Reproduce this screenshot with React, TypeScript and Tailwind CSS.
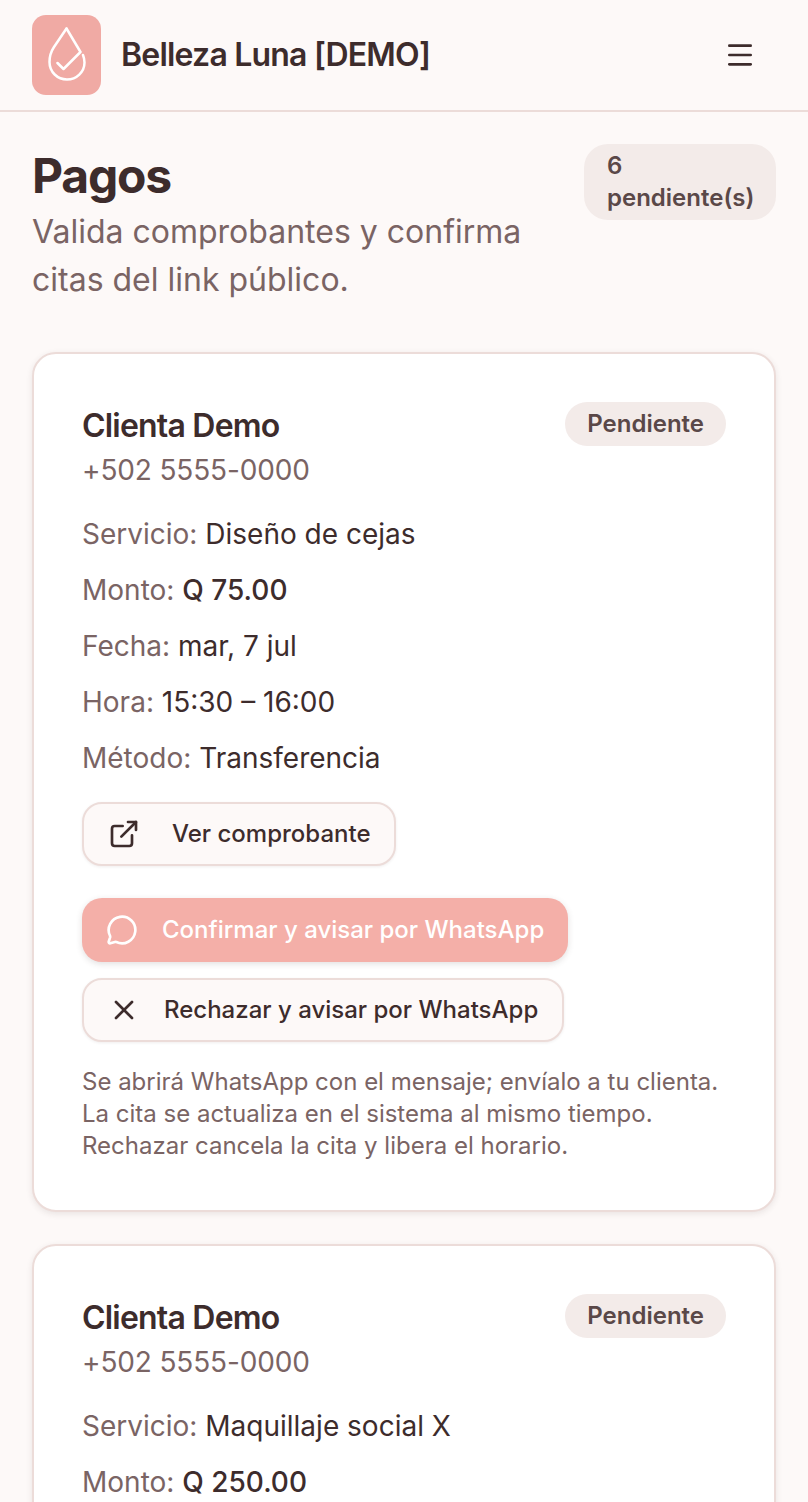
import { ExternalLink, Menu, MessageCircle, X } from "lucide-react";

const payments = [
  {
    service: "Diseño de cejas",
    amount: "Q 75.00",
    date: "mar, 7 jul",
    time: "15:30 – 16:00",
    method: "Transferencia",
  },
  {
    service: "Maquillaje social X",
    amount: "Q 250.00",
    date: "mar, 7 jul",
    time: "15:30 – 16:00",
    method: "Transferencia",
  },
];

function Logo() {
  return (
    <div className="flex h-[80px] w-[69px] items-center justify-center rounded-[14px] bg-[#f0aaa4]">
      <svg width="38" height="56" viewBox="0 0 38 56" fill="none" stroke="white" strokeWidth="2.5" strokeLinecap="round" strokeLinejoin="round">
        <path d="M18.5 1.5 L6 20 C3 24.5 1.5 30 1.5 35 C1.5 45 9.5 52.5 19 52.5 C28.5 52.5 36.5 45 36.5 35.5 C36.5 33 36 30.5 35 28" />
        <path d="M18.5 1.5 L32.5 25 L15.5 42 L9.5 36" />
      </svg>
    </div>
  );
}

function Row({ label, value, strong }: { label: string; value: string; strong?: boolean }) {
  return (
    <p className="text-[28px] leading-[40px] text-[#7a6464]">
      {label}: <span className={strong ? "font-medium text-[#3d2c2c]" : "text-[#3d2c2c]"}>{value}</span>
    </p>
  );
}

function PaymentCard({ p }: { p: (typeof payments)[number] }) {
  return (
    <article className="rounded-[24px] border-2 border-[#ecdcd9] bg-white p-[48px] shadow-[0_2px_6px_rgba(61,44,44,0.1)]">
      <div className="flex items-start justify-between">
        <div>
          <h2 className="text-[32px] leading-[48px] font-semibold tracking-[-0.8px] text-[#3d2c2c]">Clienta Demo</h2>
          <p className="text-[28px] leading-[40px] tracking-[-0.14px] text-[#7a6464]">+502 5555-0000</p>
        </div>
        <span className="rounded-full bg-[#f3ebe9] px-[22px] py-[6px] text-[24px] leading-[32px] font-semibold text-[#5a4848]">Pendiente</span>
      </div>
      <div className="mt-[24px] flex flex-col gap-[16px]">
        <Row label="Servicio" value={p.service} />
        <Row label="Monto" value={p.amount} strong />
        <Row label="Fecha" value={p.date} />
        <Row label="Hora" value={p.time} />
        <Row label="Método" value={p.method} />
      </div>
      <button className="mt-[24px] flex h-[64px] w-[314px] items-center gap-[32px] rounded-[20px] border-2 border-[#ecdcd9] bg-[#fdf9f8] pl-[24px] text-[24px] font-medium text-[#3d2c2c] shadow-[0_1px_3px_rgba(61,44,44,0.08)]">
        <ExternalLink size={32} strokeWidth={2} />
        Ver comprobante
      </button>
      <button className="mt-[32px] flex h-[64px] w-[486px] items-center gap-[24px] rounded-[20px] bg-[#f4afa8] pl-[24px] text-[24px] font-medium text-white shadow-[0_2px_6px_rgba(61,44,44,0.15)]">
        <MessageCircle size={32} strokeWidth={2} />
        Confirmar y avisar por WhatsApp
      </button>
      <button className="mt-[16px] flex h-[64px] w-[482px] items-center gap-[24px] rounded-[20px] border-2 border-[#ecdcd9] bg-[#fdf9f8] pl-[24px] text-[24px] font-medium text-[#3d2c2c] shadow-[0_1px_3px_rgba(61,44,44,0.08)]">
        <X size={32} strokeWidth={2} />
        Rechazar y avisar por WhatsApp
      </button>
      <p className="mt-[24px] text-[24px] leading-[32px] text-[#7a6464]">
        Se abrirá WhatsApp con el mensaje; envíalo a tu clienta.
        <br />
        La cita se actualiza en el sistema al mismo tiempo.
        <br />
        Rechazar cancela la cita y libera el horario.
      </p>
    </article>
  );
}

export default function App() {
  return (
    <div className="h-[1502px] overflow-hidden bg-[#fdf9f8] font-['Inter',sans-serif] text-[#3d2c2c]">
      <header className="flex h-[112px] items-center justify-between border-b-2 border-[#ecdcd9] pr-[52px] pl-[32px]">
        <div className="flex items-center gap-[20px]">
          <Logo />
          <span className="text-[32px] font-semibold tracking-[-0.8px]">Belleza Luna [DEMO]</span>
        </div>
        <Menu size={32} strokeWidth={2} />
      </header>
      <main className="flex flex-col gap-[48px] px-[32px] pt-[32px]">
        <div className="flex items-start justify-between">
          <div className="w-[520px]">
            <h1 className="text-[48px] leading-[64px] font-bold tracking-[-1.2px]">Pagos</h1>
            <p className="text-[32px] leading-[48px] text-[#7a6464]">Valida comprobantes y confirma citas del link público.</p>
          </div>
          <span className="w-[192px] rounded-[24px] bg-[#f3ebe9] px-[23px] py-[6px] text-[24px] leading-[32px] font-semibold text-[#5a4848]">6 pendiente(s)</span>
        </div>
        <div className="flex flex-col gap-[32px]">
          {payments.map((p) => (
            <PaymentCard key={p.service} p={p} />
          ))}
        </div>
      </main>
    </div>
  );
}
